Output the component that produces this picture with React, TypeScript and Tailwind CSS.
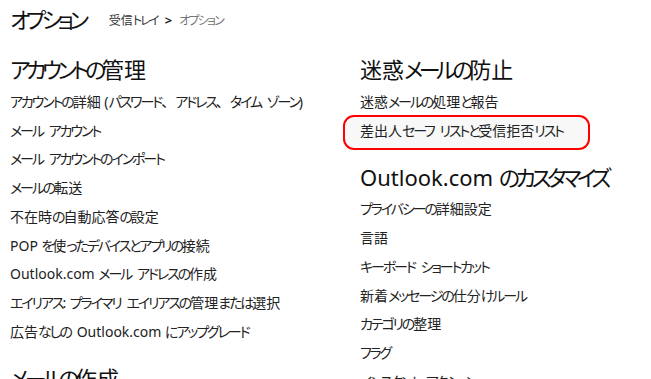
import React from "react";

/* =======================
   Data
======================= */

type Section = {
  title: string;
  items: string[];
};

const leftSections: Section[] = [
  {
    title: "アカウントの管理",
    items: [
      "アカウントの詳細 (パスワード、アドレス、タイム ゾーン)",
      "メール アカウント",
      "メール アカウントのインポート",
      "メールの転送",
      "不在時の自動応答の設定",
      "POP を使ったデバイスとアプリの接続",
      "Outlook.com メール アドレスの作成",
      "エイリアス: プライマリ エイリアスの管理または選択",
      "広告なしの Outlook.com にアップグレード",
    ],
  },
  {
    title: "メールの作成",
    items: ["メッセージのフォントと署名", "返信メッセージの書式", "メールの送信元アドレス"],
  },
];

const rightSections: Section[] = [
  {
    title: "迷惑メールの防止",
    items: ["迷惑メールの処理と報告", "差出人セーフ リストと受信拒否リスト"],
  },
  {
    title: "Outlook.com のカスタマイズ",
    items: [
      "プライバシーの詳細設定",
      "言語",
      "キーボード ショートカット",
      "新着メッセージの仕分けルール",
      "カテゴリの整理",
      "フラグ",
      "インスタント アクション",
    ],
  },
];

const HIGHLIGHT = "差出人セーフ リストと受信拒否リスト";

/* =======================
   Helpers
======================= */

// Kana runs are set tighter, the UI font in the shot uses narrow kana.
// A space right after a kana run gets back what the tracking took.
const KANA = /([\u3041-\u30ff]+)/;

function Jp({ text, kana }: { text: string; kana: string }) {
  const parts = text.split(KANA);
  return (
    <>
      {parts.map((p, i) => {
        if (i % 2 === 1) {
          return (
            <span key={i} className={kana}>
              {p}
            </span>
          );
        }
        if (i > 0 && p.startsWith(" ")) {
          return (
            <React.Fragment key={i}>
              <span className="inline-block w-[0.42em]" />
              {p.slice(1)}
            </React.Fragment>
          );
        }
        return <React.Fragment key={i}>{p}</React.Fragment>;
      })}
    </>
  );
}

const HEAD_KANA = "[font-feature-settings:'palt'] tracking-[-0.2em]";
const ITEM_KANA = "[font-feature-settings:'palt'] tracking-[-0.15em]";

/* =======================
   Components
======================= */

function SectionBlock({ section, first }: { section: Section; first: boolean }) {
  return (
    <div className={first ? "" : "mt-[14px]"}>
      <h2 className="text-[22px] leading-[36px] text-[#111] whitespace-nowrap">
        <Jp text={section.title} kana={HEAD_KANA} />
      </h2>
      <ul>
        {section.items.map(item => (
          <li key={item} className="relative h-[28.75px] flex items-center text-[14px] text-[#222] whitespace-nowrap">
            {item === HIGHLIGHT && (
              <span className="absolute left-[-17px] top-[-1px] w-[247px] h-[35px] rounded-[11px] border-[2.5px] border-[#f00] bg-[#f8f8f8]" />
            )}
            <span className="relative">
              <Jp text={item} kana={ITEM_KANA} />
            </span>
          </li>
        ))}
      </ul>
    </div>
  );
}

export default function App() {
  return (
    <div className="w-[651px] h-[379px] overflow-hidden bg-white text-black font-['Noto_Sans','Noto_Sans_CJK_JP',sans-serif]">
      {/* Header */}
      <div className="flex items-center h-[36px] pl-[10px] pt-[2px]">
        <h1 className="text-[22px] leading-none text-[#111]">
          <Jp text="オプション" kana={HEAD_KANA} />
        </h1>
        <div className="ml-[24px] mt-[4px] flex items-center text-[12px]">
          <span className="text-[#333]">
            <Jp text="受信トレイ" kana={ITEM_KANA} />
          </span>
          <span className="mx-[7px] font-bold text-[13px] text-[#222]">&gt;</span>
          <span className="text-[#777]">
            <Jp text="オプション" kana={ITEM_KANA} />
          </span>
        </div>
      </div>

      {/* Columns */}
      <div className="grid grid-cols-[350px_1fr] pl-[10px] pt-[15px]">
        <div>
          {leftSections.map((s, i) => (
            <SectionBlock key={s.title} section={s} first={i === 0} />
          ))}
        </div>
        <div>
          {rightSections.map((s, i) => (
            <SectionBlock key={s.title} section={s} first={i === 0} />
          ))}
        </div>
      </div>
    </div>
  );
}
